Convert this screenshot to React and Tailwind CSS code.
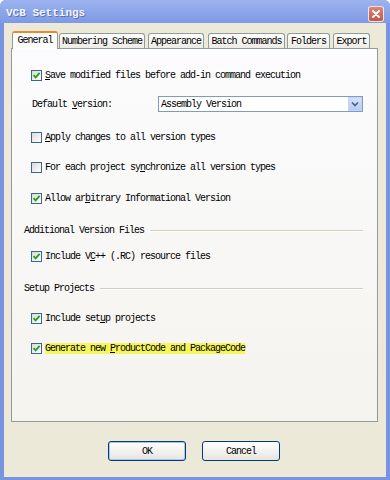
import React from "react";

function Check() {
  return (
    <svg width="9" height="9" viewBox="0 0 9 9">
      <path d="M1.5 4.2 L3.6 6.4 L7.6 1.8" fill="none" stroke="#21a121" strokeWidth="1.8" />
    </svg>
  );
}

function Box({ checked }) {
  return (
    <div className="w-[11px] h-[11px] shrink-0 border border-[#3d6590] bg-gradient-to-br from-[#dcdcd4] to-white flex items-center justify-center">
      {checked ? <Check /> : null}
    </div>
  );
}

function CheckRow({ checked, children, className }) {
  return (
    <div className={"flex items-center h-[11px] pl-[19px] gap-[3px] " + className}>
      <Box checked={checked} />
      <span className="leading-[11px] whitespace-pre">{children}</span>
    </div>
  );
}

function Section({ label, className }) {
  return (
    <div className={"flex items-center h-[11px] pl-[12px] pr-[14px] gap-[6px] " + className}>
      <span className="whitespace-pre leading-[11px]">{label}</span>
      <div className="flex-1 h-[2px] border-t border-[#d0d0bf] border-b border-b-white"></div>
    </div>
  );
}

function Tab({ label, className }) {
  return (
    <div
      className={
        "h-[15px] rounded-t-[3px] border border-b-0 border-[#919b9c] bg-gradient-to-b from-white to-[#ecebe6] flex items-center justify-center whitespace-pre " +
        className
      }
    >
      {label}
    </div>
  );
}

export default function App() {
  return (
    <div className="w-[390px] h-[480px] bg-[#7893e0] rounded-t-[6px] flex flex-col font-['Liberation_Mono',monospace] text-[10px] tracking-[-1px] text-black overflow-hidden">
      {/* Title bar */}
      <div className="h-[23px] shrink-0 flex items-center pl-[6px] pr-[6px] bg-gradient-to-b from-[#9db3ef] to-[#7e9ae4]">
        <span className="text-[11px] font-bold tracking-[0px] text-[#f2f5fd] [text-shadow:1px_1px_0_#5a72b8] pt-[3px]">
          VCB Settings
        </span>
        <div className="ml-auto w-[16px] h-[16px] mt-[5px] rounded-[3px] border border-white/80 bg-gradient-to-b from-[#d88878] to-[#c0584a] flex items-center justify-center">
          <svg width="10" height="10" viewBox="0 0 10 10">
            <path d="M2 2 L8 8 M8 2 L2 8" stroke="white" strokeWidth="1.8" strokeLinecap="round" />
          </svg>
        </div>
      </div>

      {/* Body */}
      <div className="flex-1 mx-[4px] mb-[3px] bg-[#ece9d8] flex flex-col pl-[7px] pr-[8px] pt-[8px]">
        {/* Tabs */}
        <div className="flex items-end h-[17px] relative z-10">
          <div className="ml-[1px] w-[46px] h-[18px] -mb-px rounded-t-[3px] border border-b-0 border-[#919b9c] border-t-[#e68b2c] border-t-2 bg-white flex items-center justify-center pb-[1px] whitespace-pre">
            General
          </div>
          <Tab label="Numbering Scheme" className="ml-[1px] w-[86px]" />
          <Tab label="Appearance" className="ml-[3px] w-[56px]" />
          <Tab label="Batch Commands" className="ml-[4px] w-[77px]" />
          <Tab label="Folders" className="ml-[2px] w-[43px]" />
          <Tab label="Export" className="ml-[3px] w-[37px]" />
        </div>

        {/* Panel */}
        <div className="h-[374px] shrink-0 border border-[#919b9c] bg-gradient-to-b from-[#fcfcfe] to-[#f4f3ee] flex flex-col">
          <CheckRow checked className="mt-[21px]">
            <span className="underline">S</span>ave modified files before add-in command execution
          </CheckRow>

          <div className="flex items-center h-[16px] mt-[15px] pl-[20px]">
            <span className="w-[126px] shrink-0 whitespace-pre">
              Default <span className="underline">v</span>ersion:
            </span>
            <div className="w-[205px] h-[16px] border border-[#7f9db9] bg-white flex items-center">
              <span className="pl-[2px] flex-1 whitespace-pre">Assembly Version</span>
              <div className="w-[14px] h-[14px] bg-gradient-to-b from-[#d4e0fc] to-[#b8cbf6] border border-[#c3d3fd] flex items-center justify-center">
                <svg width="8" height="6" viewBox="0 0 8 6">
                  <path d="M1 1.5 L4 4.5 L7 1.5" fill="none" stroke="#4d6185" strokeWidth="1.6" />
                </svg>
              </div>
            </div>
          </div>

          <CheckRow className="mt-[20px]">
            <span className="underline">A</span>pply changes to all version types
          </CheckRow>
          <CheckRow className="mt-[19px]">
            For each project sy<span className="underline">n</span>chronize all version types
          </CheckRow>
          <CheckRow checked className="mt-[20px]">
            Allow ar<span className="underline">b</span>itrary Informational Version
          </CheckRow>

          <Section label="Additional Version Files" className="mt-[21px]" />

          <CheckRow checked className="mt-[15px]">
            Include V<span className="underline">C</span>++ (.RC) resource files
          </CheckRow>

          <Section label="Setup Projects" className="mt-[21px]" />

          <CheckRow checked className="mt-[19px]">
            Include set<span className="underline">u</span>p projects
          </CheckRow>
          <CheckRow checked className="mt-[19px]">
            <span className="bg-[#f6f65a]">
              Generate new <span className="underline">P</span>roductCode and PackageCode
            </span>
          </CheckRow>
        </div>

        {/* Buttons */}
        <div className="flex justify-center gap-[16px] mt-[19px] pr-[1px]">
          <button className="w-[78px] h-[20px] rounded-[3px] border border-[#003c74] bg-gradient-to-b from-white to-[#e6e5de] shadow-[inset_0_0_0_1px_#a9c4f5] flex items-center justify-center tracking-[-1px]">
            OK
          </button>
          <button className="w-[78px] h-[20px] rounded-[3px] border border-[#003c74] bg-gradient-to-b from-white to-[#e6e5de] flex items-center justify-center tracking-[-1px]">
            Cancel
          </button>
        </div>
      </div>
    </div>
  );
}
